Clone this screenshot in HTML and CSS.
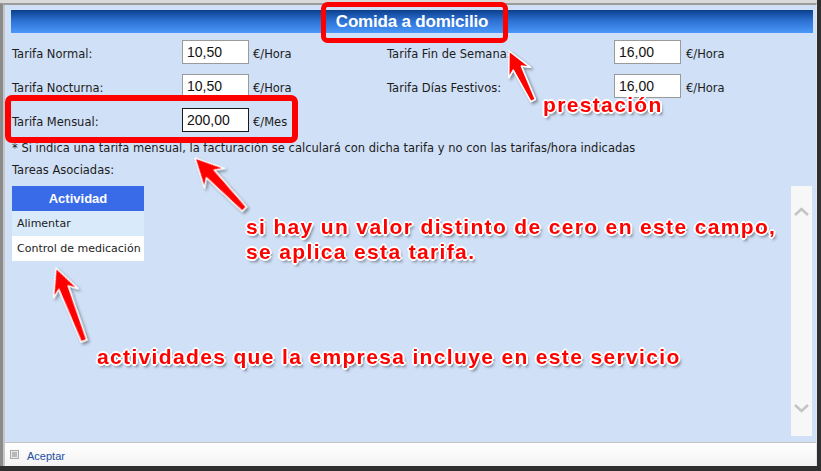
FILE: index.html
```html
<!DOCTYPE html>
<html>
<head>
    <meta charset="UTF-8">
    <title>Comida a domicilio</title>
    <link rel="stylesheet" href="styles.css">
</head>
<body>
    <div class="screen">
        <div class="topstrip"></div>
        <div class="window">
            <div class="titlebar">Comida a domicilio</div>

            <div class="content">
                <!-- Tarifas del servicio -->
                <div class="rates">
                    <span class="lbl">Tarifa Normal:</span>
                    <input class="field" type="text" value="10,50" readonly>
                    <span class="unit">€/Hora</span>
                    <span class="lbl">Tarifa Fin de Semana:</span>
                    <input class="field" type="text" value="16,00" readonly>
                    <span class="unit">€/Hora</span>

                    <span class="lbl">Tarifa Nocturna:</span>
                    <input class="field" type="text" value="10,50" readonly>
                    <span class="unit">€/Hora</span>
                    <span class="lbl">Tarifa Días Festivos:</span>
                    <input class="field" type="text" value="16,00" readonly>
                    <span class="unit">€/Hora</span>

                    <span class="lbl">Tarifa Mensual:</span>
                    <input class="field focused" type="text" value="200,00" readonly>
                    <span class="unit">€/Mes</span>
                </div>

                <p class="note">* Si indica una tarifa mensual, la facturación se calculará con dicha tarifa y no con las tarifas/hora indicadas</p>
                <p class="caption">Tareas Asociadas:</p>

                <div class="lower">
                    <table class="tasks">
                        <tr><th>Actividad</th></tr>
                        <tr class="alt"><td>Alimentar</td></tr>
                        <tr><td>Control de medicación</td></tr>
                    </table>
                    <div class="scroller">
                        <svg width="21" height="20" viewBox="0 0 21 20"><polyline points="4,14 10.5,8 17,14" fill="none" stroke="#c4c4c4" stroke-width="2.5"/></svg>
                        <svg width="21" height="20" viewBox="0 0 21 20"><polyline points="4,6 10.5,12 17,6" fill="none" stroke="#c4c4c4" stroke-width="2.5"/></svg>
                    </div>
                </div>
            </div>

            <div class="footer">
                <span class="btn-icon"></span>
                <a class="accept" href="#">Aceptar</a>
            </div>
        </div>

        <!-- Anotaciones sobre la captura -->
        <svg class="marks" width="821" height="471" viewBox="0 0 821 471">
            <defs>
                <filter id="shadow" x="-30%" y="-30%" width="160%" height="160%">
                    <feDropShadow dx="2" dy="2" stdDeviation="1.5" flood-color="#000" flood-opacity="0.4"/>
                </filter>
            </defs>
            <rect x="323.5" y="4.5" width="182" height="36" rx="4" fill="none" stroke="#ff0000" stroke-width="5"/>
            <rect x="8" y="98" width="287" height="42" rx="4" fill="none" stroke="#ff0000" stroke-width="6"/>
            <g fill="#ff0000" stroke="#ffffff" stroke-width="1.5" stroke-linejoin="round" filter="url(#shadow)">
                <polygon transform="translate(509,51) rotate(-26)" points="0,0 12,24 4.5,19 2.5,55 -2.5,55 -4.5,19 -12,24"/>
                <polygon transform="translate(195,158) rotate(-44)" points="0,0 14,28 5.5,22 3,71 -3,71 -5.5,22 -14,28"/>
                <polygon transform="translate(56,268) rotate(-21)" points="0,0 13,27 5,21 3,78 -3,78 -5,21 -13,27"/>
            </g>
        </svg>
        <div class="callout callout-prestacion">prestación</div>
        <div class="callout callout-tarifa">si hay un valor distinto de cero en este campo,<br>se aplica esta tarifa.</div>
        <div class="callout callout-tareas">actividades que la empresa incluye en este servicio</div>
    </div>
</body>
</html>
```

FILE: styles.css
```css
body {
    margin: 0;
    background: #2f2f2f;
    font-family: "DejaVu Sans", Verdana, sans-serif;
    font-size: 11.5px;
    color: #1c1c1c;
}

.screen {
    position: relative;
    width: 821px;
    height: 471px;
    overflow: hidden;
}

.topstrip {
    height: 3px;
    width: 817px;
    background: #d9d9d9;
}

.window {
    box-sizing: border-box;
    width: 817px;
    height: 463px;
    display: flex;
    flex-direction: column;
    border-top: 2px solid #9c9c9c;
    border-left: 3px solid #8a8a8a;
    border-right: 1px solid #dfe6ef;
    background: linear-gradient(to right, #c6c6c6 2px, #d0e0f6 2px);
}

.titlebar {
    margin: 5px 3px 0 8px;
    height: 23px;
    line-height: 23px;
    text-align: center;
    color: #ffffff;
    font-family: "Liberation Sans", Arial, sans-serif;
    font-size: 17px;
    font-weight: bold;
    letter-spacing: -0.2px;
    background: linear-gradient(to bottom, #0b3f8c 0%, #2b6fd0 45%, #4a98fb 100%);
}

.content {
    flex: 1;
    padding: 0 4px 0 9px;
    display: flex;
    flex-direction: column;
}

.rates {
    margin-top: 7px;
    display: grid;
    grid-template-columns: 170px 71px 134px 227px 72px 1fr;
    grid-auto-rows: 24px;
    row-gap: 10px;
    align-items: center;
}

.lbl {
    padding-top: 3px;
}

.unit {
    padding-top: 3px;
}

.field {
    box-sizing: border-box;
    width: 67px;
    height: 24px;
    margin: 0;
    padding: 0 4px;
    border: 1px solid #9a9a9a;
    background: #ffffff;
    font-family: "Liberation Sans", Arial, sans-serif;
    font-size: 14px;
    color: #111111;
    outline: none;
}

.field.focused {
    border-color: #1a1a1a;
}

.note {
    margin: 9px 0 0 0;
    line-height: 14px;
}

.caption {
    margin: 8px 0 0 0;
    line-height: 14px;
}

.lower {
    margin-top: 9px;
    height: 250px;
    display: flex;
    align-items: flex-start;
}

.tasks {
    width: 132px;
    border-collapse: collapse;
    table-layout: fixed;
}

.tasks th {
    height: 25px;
    padding: 0;
    background: #396be8;
    color: #ffffff;
    font-family: "Liberation Sans", Arial, sans-serif;
    font-size: 13px;
    font-weight: bold;
}

.tasks td {
    height: 25px;
    padding: 0 5px;
    background: #ffffff;
    font-size: 11px;
    white-space: nowrap;
    overflow: hidden;
}

.tasks .alt td {
    background: #d9eafb;
}

.scroller {
    margin-left: auto;
    width: 21px;
    height: 250px;
    background: #f7f7f7;
    display: flex;
    flex-direction: column;
    justify-content: space-between;
    padding: 15px 0 17px;
    box-sizing: border-box;
}

.scroller svg {
    display: block;
}

.footer {
    margin-left: 2px;
    height: 24px;
    box-sizing: border-box;
    border-top: 1px solid #c4c4c4;
    background: linear-gradient(to bottom, #ffffff, #f3f3f3);
    display: flex;
    align-items: center;
    padding-left: 5px;
}

.btn-icon {
    box-sizing: border-box;
    width: 9px;
    height: 9px;
    border: 1px solid #a8a8a8;
    background: #b9b9b9;
    box-shadow: inset 0 0 0 1px #e9e9e9;
    margin-right: 8px;
}

.accept {
    font-family: "Liberation Sans", Arial, sans-serif;
    font-size: 11px;
    color: #1f4fa2;
    text-decoration: none;
    padding-top: 2px;
}

.marks {
    position: absolute;
    left: 0;
    top: 0;
}

.callout {
    position: absolute;
    font-family: "Liberation Sans", Arial, sans-serif;
    font-weight: bold;
    font-size: 21px;
    letter-spacing: 1.35px;
    line-height: 25px;
    color: #ff0000;
    white-space: nowrap;
    text-shadow: -1px -1px 0 #fff, 1px -1px 0 #fff, -1px 1px 0 #fff, 1px 1px 0 #fff,
        0 -2px 0 #fff, 0 2px 0 #fff, -2px 0 0 #fff, 2px 0 0 #fff,
        2px 3px 3px rgba(0, 0, 0, 0.5);
}

.callout-prestacion {
    left: 543px;
    top: 92px;
}

.callout-tarifa {
    left: 246px;
    top: 214px;
}

.callout-tareas {
    left: 97px;
    top: 344px;
}
```
